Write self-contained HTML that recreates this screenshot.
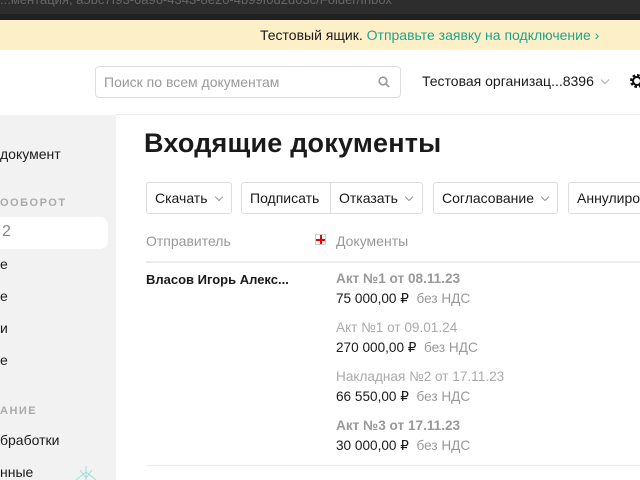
<!DOCTYPE html>
<html><head><meta charset="utf-8"><style>
*{margin:0;padding:0;box-sizing:border-box}
body{width:640px;height:480px;overflow:hidden;position:relative;font-family:"Liberation Sans","DejaVu Sans",sans-serif;background:#fff;color:#1a1a1a}
.a{position:absolute;white-space:nowrap}
.top{left:0;top:0;width:640px;height:20px;background:#2d2d2d}
.top2{left:0;top:14px;width:640px;height:6px;background:#202020}
.ban{left:0;top:20px;width:640px;height:30px;background:#fdefc8;font-size:14px;line-height:30px}
.side{left:0;top:115px;width:116px;height:365px;background:#f2f2f2}
.hl{left:116px;top:114px;width:524px;height:1px;background:#ececec}
.btn{position:absolute;top:182px;height:32px;border:1px solid #dcdcdc;border-radius:3px;font-size:14px;line-height:30px;padding-left:8px;background:#fff;white-space:nowrap;overflow:hidden}
.chev{display:inline-block;width:6px;height:6px;border-right:1.3px solid #999;border-bottom:1.3px solid #999;transform:rotate(45deg);margin-left:8px;position:relative;top:-3px}
.g{color:#999}
.doc{font-size:13.6px}
</style></head><body>
<div class="a top"></div><div class="a top2"></div>
<div class="a" style="left:0;top:-8px;font-size:13px;color:#666">...ментация, a5bc7f93-6a96-4343-8e20-4b99f0d2d03c/Folder/Inbox</div>
<div class="a ban"><span style="position:absolute;left:260px">Тестовый ящик. <span style="color:#21a38b">Отправьте заявку на подключение ›</span></span></div>
<div class="a" style="left:95px;top:66px;width:306px;height:32px;border:1px solid #dedede;border-radius:4px;font-size:14px;line-height:30px;padding-left:8px;color:#9a9a9a">Поиск по всем документам
<svg style="position:absolute;right:10px;top:9px" width="12" height="12" viewBox="0 0 12 12"><circle cx="5" cy="5" r="3.8" fill="none" stroke="#999" stroke-width="1.6"/><path d="M8 8l3 3" stroke="#999" stroke-width="1.8"/></svg></div>
<div class="a" style="left:422px;top:73px;font-size:14px">Тестовая организац...8396<span class="chev" style="border-color:#aaa"></span></div>
<svg class="a" style="left:628px;top:72px" width="16" height="18" viewBox="0 0 16 18"><circle cx="9" cy="9" r="5.5" fill="none" stroke="#111" stroke-width="3" stroke-dasharray="2.5 1.8"/><circle cx="9" cy="9" r="4" fill="none" stroke="#111" stroke-width="2"/></svg>
<div class="a hl"></div>
<div class="a side"></div>
<div class="a" style="left:0;top:146px;font-size:14px">документ</div>
<div class="a" style="left:0;top:197px;font-size:11px;font-weight:bold;color:#aaa;letter-spacing:1.5px">ООБОРОТ</div>
<div class="a" style="left:0;top:217px;width:108px;height:32px;background:#fff;border-radius:0 8px 8px 0;font-size:16px;line-height:30px;color:#888;padding-left:2px">2</div>
<div class="a" style="left:0;top:256px;font-size:14px">е</div>
<div class="a" style="left:0;top:288px;font-size:14px">е</div>
<div class="a" style="left:0;top:320px;font-size:14px">и</div>
<div class="a" style="left:0;top:352px;font-size:14px">е</div>
<div class="a" style="left:0;top:405px;font-size:11px;font-weight:bold;color:#aaa;letter-spacing:1.5px">АНИЕ</div>
<div class="a" style="left:0;top:432px;font-size:14px">бработки</div>
<div class="a" style="left:0;top:464px;font-size:14px">нные</div>
<div class="a" style="left:144px;top:128px;font-size:27px;font-weight:bold;letter-spacing:0.2px">Входящие документы</div>
<div class="btn" style="left:146px;width:86px">Скачать<span class="chev"></span></div>
<div class="btn" style="left:241px;width:90px;border-radius:3px 0 0 3px">Подписать</div>
<div class="btn" style="left:330px;width:93px;border-radius:0 3px 3px 0">Отказать<span class="chev"></span></div>
<div class="btn" style="left:433px;width:125px">Согласование<span class="chev"></span></div>
<div class="btn" style="left:568px;width:90px">Аннулиров</div>
<div class="a g" style="left:146px;top:233px;font-size:14px">Отправитель</div>
<div class="a" style="left:315px;top:234px;width:11px;height:11px;border:1px solid #ccc"><div style="position:absolute;left:4px;top:0;width:1.5px;height:9px;background:#e00"></div><div style="position:absolute;left:0;top:4px;width:9px;height:1.5px;background:#e00"></div></div>
<div class="a g" style="left:336px;top:233px;font-size:14px">Документы</div>
<div class="a" style="left:146px;top:261px;width:494px;height:2px;background:#ececec"></div>
<div class="a" style="left:146px;top:272px;font-size:13px;font-weight:bold">Власов Игорь Алекс...</div>
<div class="a doc" style="left:336px;top:271px;color:#999;font-weight:bold">Акт №1 от 08.11.23</div>
<div class="a doc" style="left:336px;top:291px">75 000,00 ₽ <span class="g">&nbsp;без НДС</span></div>
<div class="a doc" style="left:336px;top:320px;color:#aaa">Акт №1 от 09.01.24</div>
<div class="a doc" style="left:336px;top:340px">270 000,00 ₽ <span class="g">&nbsp;без НДС</span></div>
<div class="a doc" style="left:336px;top:369px;color:#aaa">Накладная №2 от 17.11.23</div>
<div class="a doc" style="left:336px;top:389px">66 550,00 ₽ <span class="g">&nbsp;без НДС</span></div>
<div class="a doc" style="left:336px;top:418px;color:#999;font-weight:bold">Акт №3 от 17.11.23</div>
<div class="a doc" style="left:336px;top:438px">30 000,00 ₽ <span class="g">&nbsp;без НДС</span></div>
<div class="a" style="left:146px;top:465px;width:494px;height:1px;background:#ececec"></div>
<svg class="a" style="left:72px;top:466px" width="28" height="14" viewBox="0 0 28 14"><path d="M14 0v14M4 14L14 6l10 8M8 4l6 8 6-8" stroke="#9ee0da" stroke-width="1" fill="none"/></svg>
</body></html>
